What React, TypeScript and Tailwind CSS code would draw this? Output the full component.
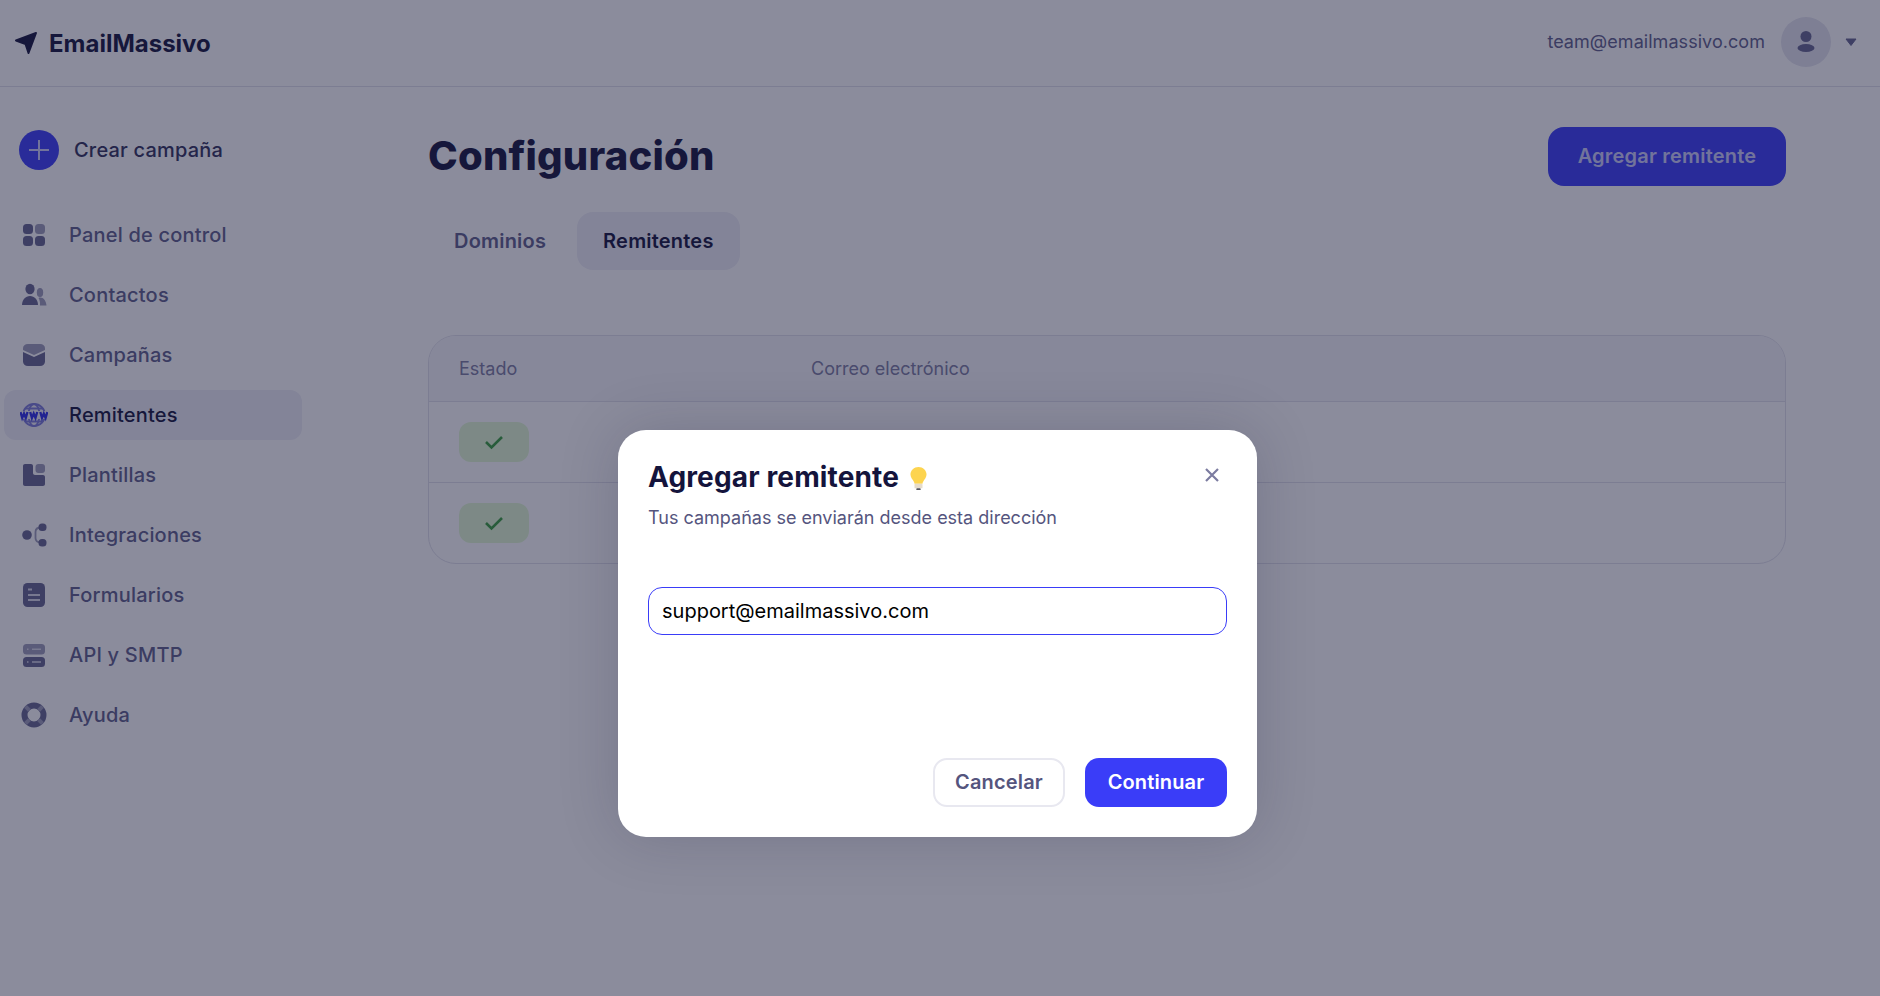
// Configuración / Remitentes with the "Agregar remitente" modal open

const navItems = [
  { label: "Panel de control", icon: "panel" },
  { label: "Contactos", icon: "contacts" },
  { label: "Campañas", icon: "campaigns" },
  { label: "Remitentes", icon: "senders", active: true },
  { label: "Plantillas", icon: "templates" },
  { label: "Integraciones", icon: "integrations" },
  { label: "Formularios", icon: "forms" },
  { label: "API y SMTP", icon: "api" },
  { label: "Ayuda", icon: "help" },
];

const NavIcon = ({ name }: { name: string }) => {
  const dark = "#64648f";
  const light = "#9c9cb8";
  return (
    <svg width="28" height="28" viewBox="0 0 28 28" className="shrink-0">
      {name === "panel" && (
        <>
          <rect x="3" y="3" width="10" height="10" rx="3.5" fill={dark} />
          <rect x="15" y="3" width="10" height="10" rx="3.5" fill={light} />
          <rect x="3" y="15" width="10" height="10" rx="3.5" fill={dark} />
          <rect x="15" y="15" width="10" height="10" rx="3.5" fill={dark} />
        </>
      )}
      {name === "contacts" && (
        <>
          <ellipse cx="10" cy="8" rx="4.6" ry="5.2" fill={dark} />
          <path d="M2 24c.2-5.500 3.500-9 8-9s7.800 3.500 8 9z" fill={dark} />
          <ellipse cx="20" cy="11.500" rx="3.200" ry="4.500" fill={light} />
          <path d="M20 24.500c.3-3-.3-5.500-1.500-7.500.5-.3 1-.4 1.700-.4 3.500 0 5.800 3.400 6.300 7.900z" fill={light} />
        </>
      )}
      {name === "campaigns" && (
        <>
          <path d="M3 7.500c0-2.800 2-4.500 5-4.500h12c3 0 5 1.700 5 4.500V9l-11 5-11-5z" fill={light} />
          <path d="M3 11l11 5 11-5v9.500c0 2.700-2 4.500-5 4.500H8c-3 0-5-1.800-5-4.500z" fill={dark} />
        </>
      )}
      {name === "senders" && (
        <>
          <circle cx="14" cy="14" r="11" fill="none" stroke="#7a7ad8" strokeWidth="1.800" />
          <ellipse cx="14" cy="14" rx="5.500" ry="11" fill="none" stroke="#7a7ad8" strokeWidth="1.800" />
          <path d="M5 7.500h18M5 20.500h18" stroke="#7a7ad8" strokeWidth="1.800" />
          <rect x="0" y="10" width="28" height="8" fill="#eeeef6" />
          <path d="M.5 11l1.700 6 1.800-4.500L5.800 17l1.700-6M10.200 11l1.700 6 1.800-4.500 1.800 4.500 1.700-6M20.300 11l1.700 6 1.800-4.500 1.800 4.500 1.700-6" fill="none" stroke="#2a2de8" strokeWidth="2.300" />
        </>
      )}
      {name === "templates" && (
        <>
          <path d="M3 5c0-1.100.900-2 2-2h6c1.100 0 2 .900 2 2v7c0 1.100.900 2 2 2h8c1.100 0 2 .900 2 2v7c0 1.100-.900 2-2 2H5c-1.100 0-2-.900-2-2z" fill={dark} />
          <rect x="15.500" y="3" width="9.500" height="9" rx="3" fill={light} />
        </>
      )}
      {name === "integrations" && (
        <>
          <path d="M21 6.500c-3.500 0-5.500 1.500-5.500 4.500v6c0 3 2 4.500 5.500 4.500" fill="none" stroke={light} strokeWidth="1.800" />
          <circle cx="7" cy="14" r="4.800" fill={dark} />
          <rect x="18.500" y="2.500" width="8" height="7.500" rx="3.500" fill={dark} />
          <rect x="18.500" y="18" width="8" height="7.500" rx="3.500" fill={dark} />
        </>
      )}
      {name === "forms" && (
        <>
          <rect x="3" y="2" width="22" height="24" rx="4.500" fill={dark} />
          <path d="M8 8.500h4M8 14h12M8 19h12" stroke="#d8d8e6" strokeWidth="2" />
        </>
      )}
      {name === "api" && (
        <>
          <rect x="3" y="3" width="22" height="10.500" rx="3.500" fill={light} />
          <rect x="3" y="16" width="22" height="10" rx="3.500" fill={dark} />
          <path d="M7 8.200h1.500M12 8.200h9M7 21h1.500M12 21h9" stroke="#d8d8e6" strokeWidth="1.500" />
        </>
      )}
      {name === "help" && (
        <>
          <path d="M14 1.500a12.500 12.500 0 1 0 0 25 12.500 12.500 0 0 0 0-25zm0 6a6.500 6.500 0 1 1 0 13 6.500 6.500 0 0 1 0-13z" fill={dark} fillRule="evenodd" />
          <path d="M5.400 5.400l4 4M22.600 5.400l-4 4M5.400 22.600l4-4M22.600 22.600l-4-4" stroke={light} strokeWidth="4" />
        </>
      )}
    </svg>
  );
};

const StatusBadge = () => (
  <div className="flex h-10 w-[70px] items-center justify-center rounded-xl bg-[#e3f9d3]">
    <svg width="20" height="20" viewBox="0 0 20 20" fill="none" stroke="#399e3d" strokeWidth="2.600">
      <path d="M2 10l5.500 5.500L18 5" />
    </svg>
  </div>
);

const App = () => {
  return (
    <div className="relative h-[996px] w-full overflow-hidden bg-white font-['Inter',sans-serif]">
      <header className="flex h-[87px] items-center justify-between border-b border-[#e0e0ea] pl-[15px] pr-[24px]">
        <div className="flex items-center gap-[12px]">
          <svg width="22" height="22" viewBox="0 0 22 22" fill="#14143c" stroke="#14143c" strokeWidth="2" strokeLinejoin="round">
            <path d="M1 8.500L21 1l-7.500 20-3-9z" />
          </svg>
          <span className="mt-[2px] text-[24px] font-bold text-[#14143c]">EmailMassivo</span>
        </div>
        <div className="mb-[2px] flex items-center">
          <span className="mb-[1px] text-[18px] tracking-[0.05px] text-[#5e5e8a]">team@emailmassivo.com</span>
          <div className="ml-[16px] flex h-[50px] w-[50px] items-center justify-center rounded-full bg-[#e4e4ee]">
            <svg width="20" height="24" viewBox="0 0 20 24" fill="#64648f">
              <circle cx="10" cy="6.500" r="5.500" />
              <ellipse cx="10" cy="18" rx="8.500" ry="4" />
            </svg>
          </div>
          <svg width="12" height="9" viewBox="0 0 12 9" fill="#64648f" stroke="#64648f" strokeLinejoin="round" className="ml-[14px] mr-[-1px]">
            <path d="M1 1h10L6 7.500z" />
          </svg>
        </div>
      </header>

      <div className="flex">
        <aside className="w-[306px] shrink-0 pl-[4px] pt-[43px]">
          <div className="flex items-center gap-[15px] pl-[15px]">
            <div className="flex h-10 w-10 items-center justify-center rounded-full bg-[#3a3df8]">
              <svg width="22" height="22" viewBox="0 0 22 22" stroke="#ffffff" strokeOpacity="0.75" strokeWidth="2">
                <path d="M11 1v20M1 11h20" />
              </svg>
            </div>
            <span className="text-[20px] font-medium tracking-[0.2px] text-[#30305a]">Crear campaña</span>
          </div>
          <nav className="mt-[40px] flex w-[298px] flex-col gap-[10px]">
            {navItems.map((item) => (
              <div
                key={item.label}
                className={
                  item.active
                    ? "flex h-[50px] items-center gap-[21px] rounded-xl bg-[#eeeef6] pl-[16px] text-[#14143c]"
                    : "flex h-[50px] items-center gap-[21px] rounded-xl pl-[16px] text-[#5e5e8a]"
                }
              >
                <NavIcon name={item.icon} />
                <span className="text-[20px] font-medium tracking-[0.2px]">{item.label}</span>
              </div>
            ))}
          </nav>
        </aside>

        <main className="flex-1 pl-[122px] pr-[94px] pt-[40px]">
          <div className="flex h-[59px] items-center justify-between">
            <h1 className="mb-[2px] text-[40px] font-extrabold tracking-[0.2px] text-[#14143c]">Configuración</h1>
            <button className="h-[59px] w-[238px] rounded-2xl bg-[#3a3df8] pb-[2px] text-[20px] font-semibold tracking-[0.2px] text-white/75">
              Agregar remitente
            </button>
          </div>
          <div className="mt-[26px] flex gap-[5px]">
            <div className="flex h-[58px] items-center rounded-2xl px-[26px] text-[20px] font-semibold tracking-[0.2px] text-[#5e5e8a]">
              Dominios
            </div>
            <div className="flex h-[58px] items-center rounded-2xl bg-[#eeeef6] px-[26px] text-[20px] font-semibold tracking-[0.2px] text-[#14143c]">
              Remitentes
            </div>
          </div>
          <div className="mt-[65px] overflow-hidden rounded-[28px] border border-[#e0e0ea]">
            <div className="flex h-[66px] items-center border-b border-[#e0e0ea] bg-[#f6f6fb] pl-[30px] text-[18px] text-[#7c7ca0]">
              <span className="w-[352px]">Estado</span>
              <span>Correo electrónico</span>
            </div>
            <div className="flex h-[81px] items-center border-b border-[#e0e0ea] pl-[30px]">
              <StatusBadge />
            </div>
            <div className="flex h-[80px] items-center pl-[30px]">
              <StatusBadge />
            </div>
          </div>
        </main>
      </div>

      {/* overlay + modal */}
      <div className="absolute inset-0 flex justify-center bg-[rgba(23,26,58,0.5)] pr-[5px] pt-[430px]">
        <div className="flex h-[407px] w-[639px] flex-col rounded-[28px] bg-white px-[30px] pb-[30px] pt-[29px] shadow-[0_0_60px_rgba(23,23,55,0.18)]">
          <div className="flex items-start justify-between">
            <div>
              <div className="flex items-center gap-[10px]">
                <h2 className="text-[28px] font-bold leading-[36px] tracking-[0.14px] text-[#14143c]">Agregar remitente</h2>
                <svg width="19" height="25" viewBox="0 0 20 28" className="mt-[2px]">
                  <path d="M10 1c-5 0-9 3.800-9 8.500 0 3.500 2.500 5.500 3.800 8 .5 1 .7 1.500.7 2.500h9c0-1 .2-1.500.7-2.500 1.300-2.500 3.800-4.500 3.800-8C19 4.800 15 1 10 1z" fill="#fdd44f" />
                  <rect x="5.500" y="20" width="9" height="5" rx="1" fill="#e6dccb" />
                  <rect x="7.500" y="25" width="5" height="2" rx="1" fill="#55555f" />
                </svg>
              </div>
              <p className="mt-[9px] text-[18px] text-[#55557e]">Tus campañas se enviarán desde esta dirección</p>
            </div>
            <svg width="16" height="16" viewBox="0 0 16 16" stroke="#7c7ca0" strokeWidth="2.200" className="mr-[7px] mt-[8px]">
              <path d="M2 2l12 12M14 2L2 14" />
            </svg>
          </div>
          <input
            readOnly
            value="support@emailmassivo.com"
            className="mt-[56px] h-[48px] w-full rounded-[14px] border border-[#3a3df8] px-[13px] text-[20px] text-black outline-none"
          />
          <div className="mt-auto flex justify-end gap-[20px]">
            <button className="h-[49px] w-[132px] rounded-[14px] border-2 border-[#e8e8f0] bg-white pb-[2px] text-[20px] font-semibold tracking-[0.15px] text-[#55557e]">
              Cancelar
            </button>
            <button className="h-[49px] w-[142px] rounded-[14px] bg-[#3a3df8] pb-[2px] text-[20px] font-semibold tracking-[0.15px] text-white">
              Continuar
            </button>
          </div>
        </div>
      </div>
    </div>
  );
};

export default App;
